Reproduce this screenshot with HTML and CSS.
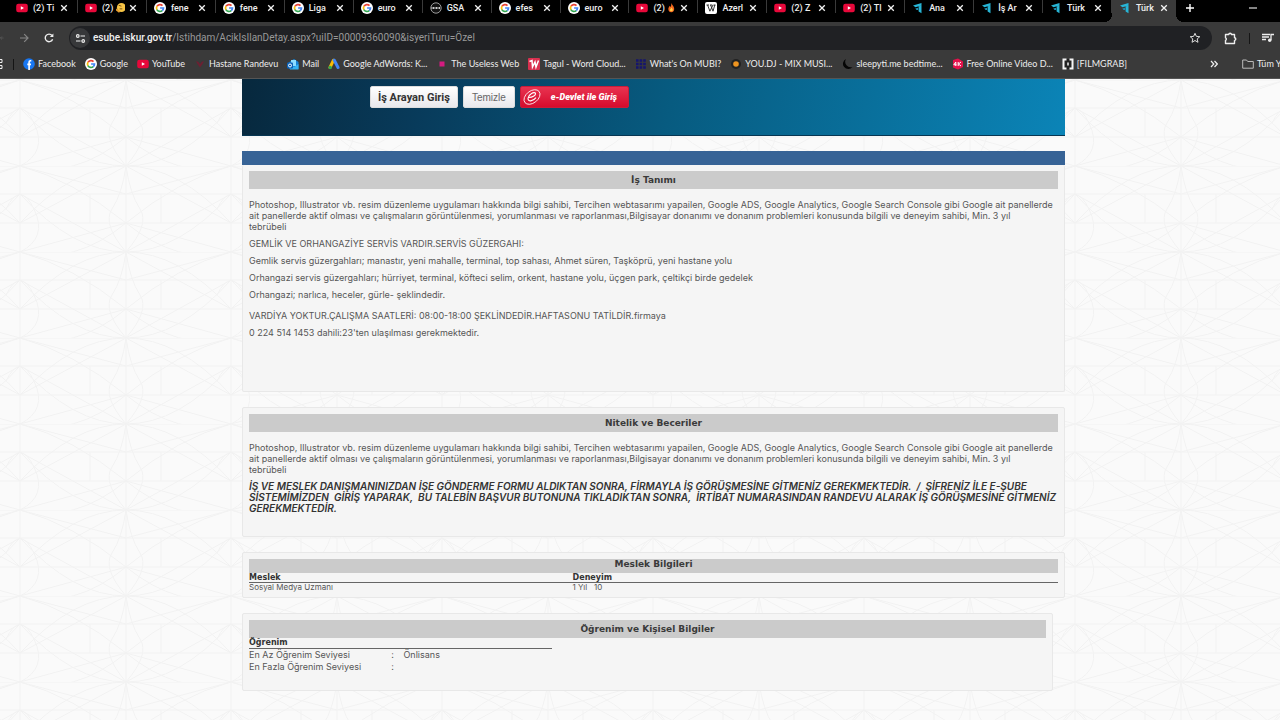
FILE: index.html
```
<!DOCTYPE html>
<html lang="tr">
<head>
  <meta charset="UTF-8">
  <meta name="viewport" content="width=device-width, initial-scale=1.0">
  <title>Türkiye İş Kurumu</title>
  <link rel="stylesheet" href="styles.css">
</head>
<body>
  <!-- Shared icons -->
  <svg class="sprite" aria-hidden="true">
    <symbol id="i-yt" viewBox="0 0 12 12"><rect x="0.2" y="1.8" width="11.6" height="8.4" rx="2.2" fill="#e8083a"/><path d="M4.8 4.2v3.6L8 6z" fill="#fff"/></symbol>
    <symbol id="i-google" viewBox="0 0 12 12"><circle cx="6" cy="6" r="6" fill="#fff"/><g fill="none" stroke-width="1.7"><path d="M8.5 3.6A3.5 3.5 0 0 0 3 4.3" stroke="#ea4335"/><path d="M3 4.2a3.5 3.5 0 0 0 0 3.6" stroke="#fbbc05"/><path d="M2.9 7.7a3.5 3.5 0 0 0 5.5.8" stroke="#34a853"/><path d="M8.3 8.6A3.4 3.4 0 0 0 9.5 6H6.1" stroke="#4285f4"/></g></symbol>
    <symbol id="i-iskur" viewBox="0 0 12 12"><path d="M1 3.4L9.500 1v2.600L3.500 5.200zM6.600 4.500l2.900-.9v7.600L6.600 9.500z" fill="#27b5d6"/><path d="M3.300 6.500l2.800-.8v2.300L4.500 8z" fill="#1d8fb0"/></symbol>
    <symbol id="i-close" viewBox="0 0 8 8"><path d="M1.2 1.2l5.6 5.6M6.8 1.2L1.2 6.8" stroke="#f2f2f2" stroke-width="1.3" fill="none"/></symbol>
  </svg>

  <header class="browser">
    <div class="tabs">
      <div class="tab"><svg class="icon"><use href="#i-yt"/></svg><span class="tab-title">(2) Ti</span><button aria-label="Kapat"><svg><use href="#i-close"/></svg></button></div>
      <div class="tab"><svg class="icon"><use href="#i-yt"/></svg><span class="tab-title">(2) <svg class="emoji" viewBox="0 0 10 12"><circle cx="6" cy="6" r="5" fill="#f6c445"/><path d="M3 3.5l3 1M7 7.5H4" stroke="#6b4513"/><path d="M0 8l4 3" stroke="#e8a030" stroke-width="2"/></svg></span><button aria-label="Kapat"><svg><use href="#i-close"/></svg></button></div>
      <div class="tab"><svg class="icon"><use href="#i-google"/></svg><span class="tab-title">fene</span><button aria-label="Kapat"><svg><use href="#i-close"/></svg></button></div>
      <div class="tab"><svg class="icon"><use href="#i-google"/></svg><span class="tab-title">fene</span><button aria-label="Kapat"><svg><use href="#i-close"/></svg></button></div>
      <div class="tab"><svg class="icon"><use href="#i-google"/></svg><span class="tab-title">Liga</span><button aria-label="Kapat"><svg><use href="#i-close"/></svg></button></div>
      <div class="tab"><svg class="icon"><use href="#i-google"/></svg><span class="tab-title">euro</span><button aria-label="Kapat"><svg><use href="#i-close"/></svg></button></div>
      <div class="tab"><svg class="icon" viewBox="0 0 12 12"><circle cx="6" cy="6" r="5.2" fill="#111" stroke="#aaa" stroke-width=".9"/><path d="M1.5 6h9" stroke="#ccc" stroke-width="2" stroke-dasharray="1 .5"/></svg><span class="tab-title">GSA</span><button aria-label="Kapat"><svg><use href="#i-close"/></svg></button></div>
      <div class="tab"><svg class="icon"><use href="#i-google"/></svg><span class="tab-title">efes</span><button aria-label="Kapat"><svg><use href="#i-close"/></svg></button></div>
      <div class="tab"><svg class="icon"><use href="#i-google"/></svg><span class="tab-title">euro</span><button aria-label="Kapat"><svg><use href="#i-close"/></svg></button></div>
      <div class="tab"><svg class="icon"><use href="#i-yt"/></svg><span class="tab-title">(2) <svg class="emoji" viewBox="0 0 10 12"><path d="M5 1c0 2 3 3.5 3 6.500a3 3.500 0 0 1-6.500 0C1.500 6 2.500 5 3 4c.5 1 .8 1 1 1.500C5 4 4.500 2.500 5 1z" fill="#f4691e"/><path d="M5 6c1 1.500 1.500 2 1.500 3a1.700 1.700 0 0 1-3.300 0C3.200 8 4.500 7.500 5 6z" fill="#ffd04a"/></svg></span><button aria-label="Kapat"><svg><use href="#i-close"/></svg></button></div>
      <div class="tab"><svg class="icon" viewBox="0 0 12 12"><rect width="12" height="12" rx="2" fill="#fff"/><path d="M1.500 3h2.500M5 3h2.300M8.500 3h2M2.600 3l2.300 6.200L8 3M5.600 3L8 9.200 9.800 3" stroke="#222" stroke-width=".9" fill="none"/></svg><span class="tab-title">Azerl</span><button aria-label="Kapat"><svg><use href="#i-close"/></svg></button></div>
      <div class="tab"><svg class="icon"><use href="#i-yt"/></svg><span class="tab-title">(2) Z</span><button aria-label="Kapat"><svg><use href="#i-close"/></svg></button></div>
      <div class="tab"><svg class="icon"><use href="#i-yt"/></svg><span class="tab-title">(2) Tl</span><button aria-label="Kapat"><svg><use href="#i-close"/></svg></button></div>
      <div class="tab"><svg class="icon"><use href="#i-iskur"/></svg><span class="tab-title">Ana</span><button aria-label="Kapat"><svg><use href="#i-close"/></svg></button></div>
      <div class="tab"><svg class="icon"><use href="#i-iskur"/></svg><span class="tab-title">İş Ar</span><button aria-label="Kapat"><svg><use href="#i-close"/></svg></button></div>
      <div class="tab"><svg class="icon"><use href="#i-iskur"/></svg><span class="tab-title">Türk</span><button aria-label="Kapat"><svg><use href="#i-close"/></svg></button></div>
      <div class="tab active"><svg class="icon"><use href="#i-iskur"/></svg><span class="tab-title">Türk</span><button aria-label="Kapat"><svg><use href="#i-close"/></svg></button></div>
      <div class="window-buttons">
        <button aria-label="Yeni sekme"><svg width="10" height="10" viewBox="0 0 10 10"><path d="M5 1v8M1 5h8" stroke="#fff" stroke-width="1.400"/></svg></button>
        <button aria-label="Küçült"><svg width="10" height="10" viewBox="0 0 10 10"><path d="M1 5h8" stroke="#ddd" stroke-width="1.200"/></svg></button>
      </div>
    </div>

    <div class="toolbar">
      <button class="back" aria-label="Geri"><svg width="10" height="10" viewBox="0 0 10 10"><path d="M9 5H1M5 1L1 5l4 4" stroke="#777" fill="none"/></svg></button>
      <button aria-label="İleri"><svg width="10" height="10" viewBox="0 0 10 10"><path d="M1 5h8M5.200 1.200L9 5 5.200 8.800" stroke="#858585" stroke-width="1.200" fill="none"/></svg></button>
      <button aria-label="Yenile"><svg width="10" height="10" viewBox="0 0 10 10"><path d="M8.600 6.200A3.800 3.800 0 1 1 8 2.500" stroke="#eee" stroke-width="1.400" fill="none"/><path d="M9.400 .5v3.600H5.800z" fill="#eee"/></svg></button>
      <div class="address">
        <span class="site-info"><svg width="11" height="11" viewBox="0 0 11 11"><g fill="none" stroke="#eee" stroke-width="1.200"><circle cx="2.800" cy="3" r="1.300"/><circle cx="8.200" cy="8" r="1.300"/><path d="M5.500 3H10M1 8h4.500"/></g></svg></span>
        <span class="url"><b>esube.iskur.gov.tr</b>/Istihdam/AcikIsIlanDetay.aspx?uiID=00009360090&amp;isyeriTuru=Özel</span>
        <button aria-label="Yer işareti"><svg width="12" height="12" viewBox="0 0 12 12"><path d="M6 1.300l1.400 3.100 3.400.3-2.600 2.200.8 3.400L6 8.500l-3 1.800.8-3.400L1.200 4.700l3.400-.3z" stroke="#ddd" fill="none"/></svg></button>
      </div>
      <div class="tools">
        <button aria-label="Uzantılar"><svg width="13" height="13" viewBox="0 0 13 13"><path d="M1.500 2.500h3.300a1.300 1.300 0 0 1 2.600 0h3.100v3.300a1.300 1.300 0 0 1 0 2.600v3.100h-9V8.400a1.400 1.400 0 0 0 0-2.600z" stroke="#eee" stroke-width="1.400" fill="none" stroke-linejoin="round"/></svg></button>
        <span class="divider"></span>
        <button aria-label="Medya"><svg width="12" height="12" viewBox="0 0 12 12"><path d="M0 2.500h8M0 5h7M0 7.500h4M9 8V2.500h3" stroke="#eee" stroke-width="1.300" fill="none"/><circle cx="7.700" cy="8.300" r="1.700" fill="#eee"/></svg></button>
      </div>
    </div>

    <nav class="bookmarks">
      <svg class="apps" width="4" height="12" viewBox="0 0 4 12"><path d="M-2 1.500h4v3h-4zM-2 7.500h4v3h-4z" stroke="#eee" fill="none"/></svg>
      <span class="divider"></span>
      <a href="#"><svg class="icon" viewBox="0 0 12 12"><circle cx="6" cy="6" r="5.800" fill="#1877f2"/><path d="M8.300 2.800H7.400q-1.300 0-1.300 1.300V12M4.300 6.400h3.700" stroke="#fff" stroke-width="1.600" fill="none"/></svg>Facebook</a>
      <a href="#"><svg class="icon"><use href="#i-google"/></svg>Google</a>
      <a href="#"><svg class="icon"><use href="#i-yt"/></svg>YouTube</a>
      <a href="#"><svg class="icon" viewBox="0 0 12 12"><path d="M2 3l2.500 1L6 6l1.500-2L10 3 8.500 6 6 9.500 3.500 6z" fill="#6c2032"/></svg>Hastane Randevu</a>
      <a href="#"><svg class="icon" viewBox="0 0 12 12"><path d="M1 5l6-4 4.500 3v7H2z" fill="#1683d8"/><path d="M4 2h5v6H4z" fill="#8ddcff"/><path d="M3 7l4 2 4.500-3v5.500H3z" fill="#35b2f2"/><rect y="4.500" width="6" height="6" rx="1" fill="#0b62b8"/><circle cx="3" cy="7.500" r="1.500" stroke="#fff" fill="none"/></svg>Mail</a>
      <a href="#"><svg class="icon" viewBox="0 0 12 12"><path d="M5.500 2.200L2 9.500" stroke="#fbbc04" stroke-width="3" stroke-linecap="round"/><path d="M6.300 2.200L10 9.500" stroke="#4285f4" stroke-width="3" stroke-linecap="round"/><circle cx="2.200" cy="9.500" r="1.700" fill="#34a853"/></svg>Google AdWords: K...</a>
      <a href="#"><svg class="icon" viewBox="0 0 12 12"><rect x="3.500" y="3.500" width="5" height="5" fill="#d41b80"/></svg>The Useless Web</a>
      <a href="#"><svg class="icon" viewBox="0 0 12 12"><rect width="12" height="12" rx="1" fill="#d9304f"/><path d="M1.500 3.500L4 2.500 4.500 9 7 4l1 5 2.500-6.500" stroke="#fff" stroke-width="1.500" fill="none"/></svg>Tagul - Word Cloud...</a>
      <a href="#"><svg class="icon" viewBox="0 0 12 12"><path d="M1 2.500h10M1 6h10M1 9.500h10" stroke="#15156e" stroke-width="2.600" stroke-dasharray="2.600 1"/></svg>What's On MUBI?</a>
      <a href="#"><svg class="icon" viewBox="0 0 12 12"><circle cx="6" cy="6" r="5" fill="#222"/><circle cx="6" cy="6" r="2.800" fill="#ee9420"/></svg>YOU.DJ - MIX MUSI...</a>
      <a href="#"><svg class="icon" viewBox="0 0 12 12"><path d="M5 1a5.300 5.300 0 1 0 6.500 8A5.500 5.500 0 0 1 5 1z" fill="#050505"/></svg>sleepyti.me bedtime...</a>
      <a href="#"><svg class="icon" viewBox="0 0 12 12"><path d="M1 2l5-1.500 5 3V9l-5 2.500L1 9.500z" fill="#e4114c"/><path d="M3.800 8V4L1.800 6.800h2.700M6.200 4v4M9 4L6.500 6 9 8" stroke="#fff" fill="none"/></svg>Free Online Video D...</a>
      <a href="#"><svg class="icon" viewBox="0 0 12 12"><rect x="1" y="1" width="10" height="10" fill="#222"/><path d="M4.500 1.500H1.500v9h3M7.500 1.500h3v9h-3" stroke="#f5f5f5" stroke-width="2" fill="none"/><path d="M6 4.500v3" stroke="#f5f5f5" stroke-width="1.500"/></svg>[FILMGRAB]</a>
      <div class="more">
        <button aria-label="Diğer yer işaretleri"><svg width="8" height="8" viewBox="0 0 8 8"><path d="M1 1l2.800 3L1 7M4.500 1l2.800 3-2.800 3" stroke="#eee" stroke-width="1.200" fill="none"/></svg></button>
        <span class="divider"></span>
        <a href="#"><svg class="icon" viewBox="0 0 12 12"><path d="M.7 10.200V2h3.800l1.200 1.500h5.600v6.700z" stroke="#bbb" fill="none"/></svg>Tüm Y</a>
      </div>
    </nav>
  </header>

  <div class="page">
    <form class="banner">
      <button type="button" class="btn login">İş Arayan Giriş</button>
      <button type="reset" class="btn">Temizle</button>
      <button type="button" class="btn edevlet"><svg width="20" height="18" viewBox="0 0 20 18"><g fill="none" stroke="#fff" stroke-width="1.100"><ellipse cx="10" cy="9" rx="9" ry="6" transform="rotate(-38 10 9)" stroke-width=".8"/><path d="M6.500 9.500C11 9.500 14 7 13.500 5.300 12.500 3.300 6.500 6 6 10.200c-.2 4 5 3.300 8-.5"/></g></svg><span>e-Devlet ile Giriş</span></button>
    </form>

    <main>
      <div class="bar"></div>
      <section class="panel job">
        <h2>İş Tanımı</h2>
        <div class="text">
          <p>Photoshop, Illustrator vb. resim düzenleme uygulamarı hakkında bilgi sahibi, Tercihen webtasarımı yapailen, Google ADS, Google Analytics, Google Search Console gibi Google ait panellerde<br>ait panellerde aktif olması ve çalışmaların görüntülenmesi, yorumlanması ve raporlanması,Bilgisayar donanımı ve donanım problemleri konusunda bilgili ve deneyim sahibi, Min. 3 yıl<br>tebrübeli</p>
          <p>GEMLİK VE ORHANGAZİYE SERVİS VARDIR.SERVİS GÜZERGAHI:</p>
          <p>Gemlik servis güzergahları; manastır, yeni mahalle, terminal, top sahası, Ahmet süren, Taşköprü, yeni hastane yolu</p>
          <p>Orhangazi servis güzergahları; hürriyet, terminal, köfteci selim, orkent, hastane yolu, üçgen park, çeltikçi birde gedelek</p>
          <p>Orhangazi; narlıca, heceler, gürle- şeklindedir.</p>
        </div>
        <div class="text">
          <p>VARDİYA YOKTUR.ÇALIŞMA SAATLERİ: 08:00-18:00 ŞEKLİNDEDİR.HAFTASONU TATİLDİR.firmaya</p>
          <p>0 224 514 1453 dahili:23'ten ulaşılması gerekmektedir.</p>
        </div>
      </section>

      <section class="panel skills">
        <h2>Nitelik ve Beceriler</h2>
        <div class="text">
          <p>Photoshop, Illustrator vb. resim düzenleme uygulamarı hakkında bilgi sahibi, Tercihen webtasarımı yapailen, Google ADS, Google Analytics, Google Search Console gibi Google ait panellerde<br>ait panellerde aktif olması ve çalışmaların görüntülenmesi, yorumlanması ve raporlanması,Bilgisayar donanımı ve donanım problemleri konusunda bilgili ve deneyim sahibi, Min. 3 yıl<br>tebrübeli</p>
          <p class="notice">İŞ VE MESLEK DANIŞMANINIZDAN İŞE GÖNDERME FORMU ALDIKTAN SONRA, FİRMAYLA İŞ GÖRÜŞMESİNE GİTMENİZ GEREKMEKTEDİR.&nbsp; /&nbsp; ŞİFRENİZ İLE E-ŞUBE<br>SİSTEMİMİZDEN&nbsp; GİRİŞ YAPARAK,&nbsp; BU TALEBİN BAŞVUR BUTONUNA TIKLADIKTAN SONRA,&nbsp; İRTİBAT NUMARASINDAN RANDEVU ALARAK İŞ GÖRÜŞMESİNE GİTMENİZ<br>GEREKMEKTEDİR.</p>
        </div>
      </section>

      <section class="panel">
        <h2 class="slim">Meslek Bilgileri</h2>
        <table class="jobs">
          <thead><tr><th>Meslek</th><th>Deneyim</th></tr></thead>
          <tbody><tr><td>Sosyal Medya Uzmanı</td><td>1 Yıl &nbsp; 10</td></tr></tbody>
        </table>
      </section>

      <section class="panel personal">
        <h2>Öğrenim ve Kişisel Bilgiler</h2>
        <table class="education">
          <thead><tr><th colspan="3">Öğrenim</th></tr></thead>
          <tbody>
            <tr><td>En Az Öğrenim Seviyesi</td><td>:</td><td>Önlisans</td></tr>
            <tr><td>En Fazla Öğrenim Seviyesi</td><td>:</td><td></td></tr>
          </tbody>
        </table>
      </section>
    </main>
  </div>
</body>
</html>
```
FILE: styles.css
```
* {
  box-sizing: border-box;
}
body {
  margin: 0;
  min-height: 100vh;
  display: flex;
  flex-direction: column;
  overflow: hidden;
  font-family: Inter, Verdana, sans-serif;
  font-size: 9px;
  line-height: 11px;
  color: #555;
}
button {
  padding: 0;
  border: 0;
  background: none;
  font: inherit;
  color: inherit;
  display: flex;
  align-items: center;
  justify-content: center;
  cursor: pointer;
}
a {
  color: inherit;
  text-decoration: none;
}
.sprite {
  display: none;
}
.icon {
  width: 12px;
  height: 12px;
  flex: none;
}

/* Browser chrome */
.browser {
  background: #3a3a3a;
  border-bottom: 1px solid #555;
  font-family: Lato, "Noto Sans", sans-serif;
  font-size: 9px;
  line-height: 14px;
  color: #eee;
}
.tabs {
  display: flex;
  height: 22px;
  padding-left: 9px;
  background: #000;
}
.tab {
  flex: 1;
  min-width: 0;
  display: flex;
  align-items: center;
  padding: 0 9px 6px 7px;
  border-right: 1px solid #333;
  border-image: linear-gradient(#3a3a3a 60%, #000 60%) 1;
}
.tab-title {
  flex: 1;
  min-width: 0;
  height: 14px;
  margin-left: 5px;
  white-space: nowrap;
  font-family: Roboto, sans-serif;
  font-weight: 500;
}
.tab button svg {
  width: 8px;
  height: 8px;
}
.emoji {
  width: 9px;
  height: 11px;
  vertical-align: -2px;
}
.tab.active {
  position: relative;
  flex: none;
  width: 64px;
  padding-right: 8px;
  background: #3a3a3a;
  border: 0;
}
/* curved feet of the open tab */
.tab.active::before,
.tab.active::after {
  content: "";
  position: absolute;
  bottom: 0;
  width: 8px;
  height: 8px;
}
.tab.active::before {
  right: 100%;
  background: radial-gradient(circle at 0 0, #000 8px, #3a3a3a 8px);
}
.tab.active::after {
  left: 100%;
  background: radial-gradient(circle at 100% 0, #000 8px, #3a3a3a 8px);
}
.window-buttons {
  width: 104px;
  display: flex;
  justify-content: space-between;
  padding: 0 22px 6px 9px;
}
.toolbar {
  display: flex;
  align-items: center;
  height: 28px;
  padding-top: 4px;
}
.toolbar > button {
  margin-right: 15px;
}
.toolbar .back {
  width: 4px;
  overflow: hidden;
  justify-content: flex-end;
}
.address {
  flex: 1;
  height: 24px;
  display: flex;
  align-items: center;
  padding: 0 11px 0 1px;
  border-radius: 12px;
  background: #202124;
}
.site-info {
  width: 20px;
  height: 20px;
  margin-right: 3px;
  border-radius: 50%;
  background: #37383a;
  display: flex;
  align-items: center;
  justify-content: center;
}
.url {
  flex: 1;
  font-family: Roboto, sans-serif;
  font-size: 10px;
  color: #999;
}
.url b {
  font-weight: 500;
  color: #f0f0f0;
}
.tools {
  width: 68px;
  display: flex;
  align-items: center;
  justify-content: space-between;
  padding: 0 6px 0 12px;
}
.divider {
  width: 1px;
  height: 11px;
  background: #151515;
}
.bookmarks {
  display: flex;
  align-items: center;
  gap: 9px;
  height: 28px;
}
.bookmarks a {
  display: flex;
  align-items: center;
  gap: 3px;
  white-space: nowrap;
}
.more {
  display: flex;
  align-items: center;
  gap: 12px;
  width: 70px;
  margin-left: auto;
}

/* Page */
.page {
  flex: 1;
  padding: 0 215px 29px 242px;
  background-color: #fafafa;
  background-image: url("data:image/svg+xml,%3Csvg xmlns='http://www.w3.org/2000/svg' width='211' height='86' viewBox='0 0 211 86'%3E%3Cg fill='none' stroke='%23f2f2f2' stroke-width='1'%3E%3Cpath d='M0 0H211M0 28H211M0 57H211M0 0V86M106 0V86M211 0V86M70 28V57M141 28V57'/%3E%3Cpath d='M0 0Q53 14 106 57T211 86M211 0Q158 14 106 57T0 86M0 57Q53 0 106 0T211 57M0 28Q53 86 106 86T211 28M0 0L106 28 211 0M0 86L106 57 211 86M0 57L106 0 211 57M0 28L106 86 211 28'/%3E%3Cpath d='M-14 43Q0 14 14 43T0 86M197 43Q211 14 225 43M106 0Q102 28 92 43T106 86M106 0Q110 28 120 43T106 86'/%3E%3C/g%3E%3C/svg%3E");
  background-position: 20px 1px;
}
.banner {
  height: 57px;
  display: flex;
  align-items: flex-start;
  gap: 5px;
  padding: 7px 0 0 128px;
  background: linear-gradient(100deg, #07283d 0%, #083b5b 22%, #075b80 52%, #0b84b7 100%);
  border-bottom: 1px solid #073652;
}
.btn {
  height: 22px;
  padding: 0 8px;
  border: 1px solid #ddd;
  border-radius: 2px;
  background: linear-gradient(#fff, #e8e8ec);
  font-family: "Liberation Sans", Arial, sans-serif;
  font-size: 10px;
  color: #666;
}
.btn.login {
  padding: 0 7px;
  font-family: Roboto, sans-serif;
  font-size: 11px;
  font-weight: 700;
  color: #333;
}
.btn.edevlet {
  width: 109px;
  justify-content: flex-start;
  gap: 9px;
  padding: 0 1px;
  border-color: #c91c3a;
  background: linear-gradient(#e83350, #d60b2d);
  font-family: Roboto, sans-serif;
  font-size: 9px;
  font-style: italic;
  font-weight: 900;
  color: #fff;
}
main {
  margin-top: 15px;
}
.bar {
  height: 14px;
  background: #376396;
}
.panel {
  margin-bottom: 15px;
  padding: 6px 6px 5px;
  border: 1px solid #e8e8e8;
  border-radius: 2px;
  background: #f5f5f5;
}
.job {
  min-height: 227px;
  border-top: 0;
}
.skills {
  min-height: 130px;
}
.personal {
  min-height: 78px;
  margin-right: 12px;
}
h2 {
  margin: 0;
  background: #cbcbcb;
  font-family: "DejaVu Sans", Verdana, sans-serif;
  font-size: 9px;
  line-height: 18px;
  text-align: center;
  color: #3a3a3a;
}
h2.slim {
  height: 14px;
  line-height: 11px;
}
.text {
  margin-top: 10px;
}
p {
  margin: 0 0 6px;
}
.notice {
  font-size: 10px;
  font-weight: 600;
  font-style: italic;
  color: #333;
}
table {
  border-collapse: collapse;
}
th, td {
  padding: 0;
  text-align: left;
}
th {
  font-family: "DejaVu Sans", Verdana, sans-serif;
  font-size: 8px;
  line-height: 9px;
  color: #333;
  border-bottom: 1px solid #666;
}
.jobs {
  width: 100%;
  table-layout: fixed;
}
.jobs th:first-child {
  width: 40%;
}
.jobs td {
  font-size: 8px;
  line-height: 9px;
}
.education {
  width: 38%;
  min-width: 240px;
}
.education th {
  line-height: 10px;
}
.education td {
  line-height: 12px;
}
.education td:first-child {
  width: 47%;
}
.education td:nth-child(2) {
  width: 4%;
}
```
